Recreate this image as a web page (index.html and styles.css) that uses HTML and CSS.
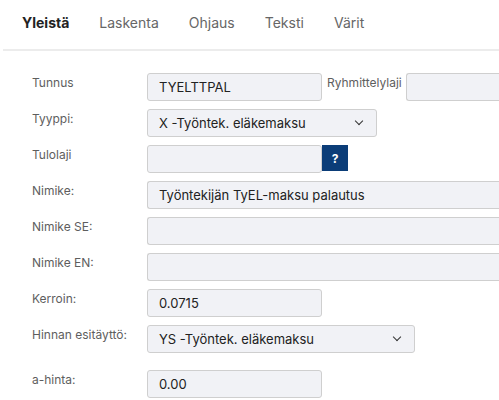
FILE: index.html
```html
<!DOCTYPE html>
<html lang="fi">
<head>
    <meta charset="UTF-8">
    <title>Palkkalaji</title>
    <link rel="stylesheet" href="styles.css">
</head>
<body>
    <div class="tabs">
        <div class="tab active">Yleistä</div>
        <div class="tab">Laskenta</div>
        <div class="tab">Ohjaus</div>
        <div class="tab">Teksti</div>
        <div class="tab">Värit</div>
    </div>
    <div class="form">
        <div class="row">
            <label>Tunnus</label>
            <input class="short" type="text" value="TYELTTPAL">
            <label class="inline">Ryhmittelylaji</label>
            <input class="grow" type="text">
        </div>
        <div class="row">
            <label>Tyyppi:</label>
            <div class="select sel-type">X -Työntek. eläkemaksu<span class="chev"></span></div>
        </div>
        <div class="row">
            <label>Tulolaji</label>
            <input class="short" type="text">
            <button class="help">?</button>
        </div>
        <div class="row">
            <label>Nimike:</label>
            <input class="grow" type="text" value="Työntekijän TyEL-maksu palautus">
        </div>
        <div class="row">
            <label>Nimike SE:</label>
            <input class="grow" type="text">
        </div>
        <div class="row">
            <label>Nimike EN:</label>
            <input class="grow" type="text">
        </div>
        <div class="row">
            <label>Kerroin:</label>
            <input class="short" type="text" value="0.0715">
        </div>
        <div class="row">
            <label>Hinnan esitäyttö:</label>
            <div class="select sel-price">YS -Työntek. eläkemaksu<span class="chev"></span></div>
        </div>
        <div class="row spaced">
            <label>a-hinta:</label>
            <input class="short" type="text" value="0.00">
        </div>
    </div>
</body>
</html>
```

FILE: styles.css
```css
body {
    font-family: Inter, "Open Sans", sans-serif;
    margin: 0;
    padding: 0;
    background: #fff;
    color: #222;
    overflow: hidden;
}

.tabs {
    display: flex;
    gap: 30px;
    padding: 14px 0 0 19px;
    height: 35px;
    margin-left: 3px;
    border-bottom: 2px solid #ececec;
}

.tab {
    font-size: 14px;
    color: #666;
}

.tab.active {
    font-weight: bold;
    color: #222;
}

.form {
    padding: 22px 0 0 32px;
}

.row {
    display: flex;
    align-items: flex-start;
    height: 28px;
    margin-bottom: 8px;
}

.row.spaced {
    margin-top: 17px;
}

.row label {
    width: 115px;
    flex: none;
    font-size: 12px;
    color: #5e5e5e;
    padding-top: 2px;
}

.row label.inline {
    width: auto;
    margin: 0 4px 0 5px;
}

.row input, .select {
    box-sizing: border-box;
    height: 28px;
    border: 1px solid #cfcfcf;
    border-radius: 3px;
    background: #f1f2f6;
    font-family: inherit;
    font-size: 13px;
    color: #222;
    padding: 0 11px;
    outline: none;
}

.row input.short {
    width: 175px;
    flex: none;
}

.row input.grow {
    flex: 1;
    min-width: 0;
    margin-right: -20px;
    border-right: none;
    border-radius: 3px 0 0 3px;
}

.select {
    display: flex;
    align-items: center;
    justify-content: space-between;
    padding-left: 11px;
    padding-right: 14px;
}

.sel-type {
    width: 230px;
}

.sel-price {
    width: 268px;
}

.chev {
    width: 5px;
    height: 5px;
    border-right: 1.5px solid #333;
    border-bottom: 1.5px solid #333;
    transform: rotate(45deg);
    margin-top: -4px;
}

.help {
    width: 26px;
    height: 26px;
    border: none;
    background: #0b3d78;
    color: #fff;
    font-weight: bold;
    font-size: 12px;
    font-family: inherit;
    padding: 0;
}
```
